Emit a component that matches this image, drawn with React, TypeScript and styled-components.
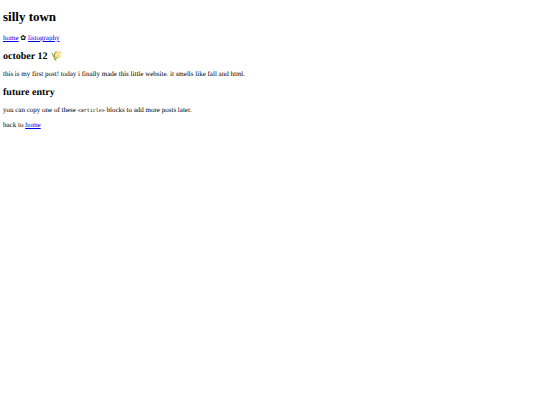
import React from "react";
import styled, { createGlobalStyle } from "styled-components";

const GlobalStyle = createGlobalStyle`
  body {
    margin: 0;
    background: #fff;
    color: #000;
    font-family: "Liberation Serif", "Times New Roman", serif;
    font-size: 7px;
    line-height: 8px;
    text-rendering: geometricPrecision;
  }
`;

const Page = styled.div`
  padding: 9px 3px;
`;

const Header = styled.header`
  display: flex;
  flex-direction: column;
  gap: 9px;
`;

const Title = styled.h1`
  margin: 0;
  font-size: 13px;
  line-height: 16px;
`;

const Main = styled.main`
  display: flex;
  flex-direction: column;
  gap: 8px;
  margin: 8px 0 6px;
`;

const Article = styled.article`
  display: flex;
  flex-direction: column;
  gap: 6px;
`;

const Heading = styled.h2`
  margin: 0;
  font-size: 10px;
  line-height: 14px;
`;

const Text = styled.p`
  margin: 0;
`;

const Link = styled.a`
  color: #0000ee;
  text-decoration: underline;
`;

const Code = styled.code`
  font-family: "DejaVu Sans Mono", monospace;
  font-size: 5px;
`;

export default function App() {
  return (
    <>
      <GlobalStyle />
      <Page>
        <Header>
          <Title>silly town</Title>
          <nav>
            <Link href="#home">home</Link> ✿ <Link href="#listography">listography</Link>
          </nav>
        </Header>
        <Main>
          <Article>
            <Heading>october 12 🌾</Heading>
            <Text>
              this is my first post! today i finally made this little website. it smells like fall and html.
            </Text>
          </Article>
          <Article>
            <Heading>future entry</Heading>
            <Text>
              you can copy one of these <Code>&lt;article&gt;</Code> blocks to add more posts later.
            </Text>
          </Article>
        </Main>
        <footer>
          <Text>
            back to <Link href="#home">home</Link>
          </Text>
        </footer>
      </Page>
    </>
  );
}
